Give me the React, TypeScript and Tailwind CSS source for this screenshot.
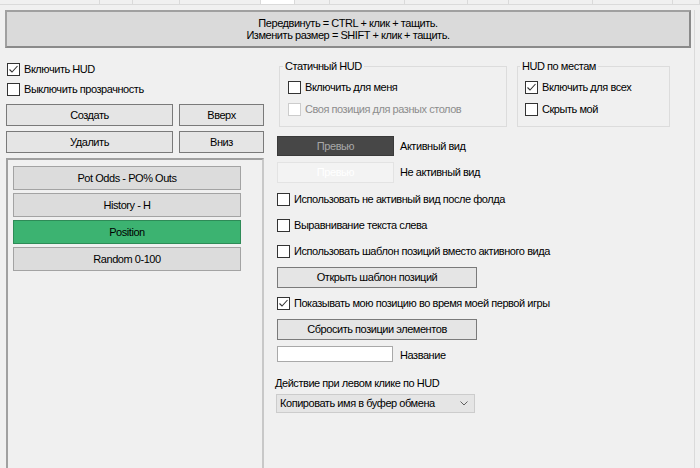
import React from "react";

const tabs = [
  { w: 100 },
  { w: 33 },
  { w: 47 },
  { w: 81 },
  { w: 34, active: true },
  { w: 35 },
  { w: 75 },
  { w: 63 },
  { w: 41 },
  { w: 84 },
  { w: 80 },
  { w: 27 },
];

const hudItems = [
  { label: "Pot Odds - PO% Outs" },
  { label: "History - H" },
  { label: "Position", active: true },
  { label: "Random 0-100" },
];

function Box({ checked, disabled }: { checked?: boolean; disabled?: boolean }) {
  return (
    <span
      className={`flex h-[13px] w-[13px] shrink-0 items-center justify-center border bg-white ${
        disabled ? "border-[#cccccc]" : "border-[#333333]"
      }`}
    >
      {checked && (
        <svg width="11" height="11" viewBox="0 0 11 11">
          <path d="M1.5 5.5 L4 8 L9.5 2" fill="none" stroke="#333333" strokeWidth="1.1" />
        </svg>
      )}
    </span>
  );
}

function Check({
  label,
  checked,
  disabled,
  className = "",
}: {
  label: string;
  checked?: boolean;
  disabled?: boolean;
  className?: string;
}) {
  return (
    <div className={`flex h-[16px] items-center gap-[4px] ${className}`}>
      <Box checked={checked} disabled={disabled} />
      <span className={disabled ? "text-[#8d8d8d]" : ""}>{label}</span>
    </div>
  );
}

function Btn({ children, className = "" }: { children: React.ReactNode; className?: string }) {
  return (
    <div
      className={`flex items-center justify-center border border-[#7a7a7a] bg-[#e5e5e5] ${className}`}
    >
      {children}
    </div>
  );
}

export default function App() {
  return (
    <div className="h-[468px] w-[700px] overflow-hidden bg-[#f0f0f0] font-['Liberation_Sans',Arial,sans-serif] text-[11px] leading-[13px] tracking-[-0.45px] text-black">
      {/* tab strip, labels cut off above */}
      <div className="flex h-[5px] border-b border-[#dadada]">
        {tabs.map((t, i) => (
          <div
            key={i}
            style={{ width: t.w }}
            className={`h-full border-r border-[#dadada] ${t.active ? "bg-white" : "bg-[#f0f0f0]"}`}
          />
        ))}
      </div>

      <div className="h-[463px] w-[695px] border-r border-[#dadada]">
        {/* hint banner */}
        <div className="ml-[5px] mt-[5px] flex h-[38px] w-[686px] flex-col items-center justify-center border-2 border-[#a0a0a0] border-b-[#8a8a8a] border-r-[#8a8a8a] bg-[#dadada] leading-[12px]">
          <span>Передвинуть = CTRL + клик + тащить.</span>
          <span>Изменить размер = SHIFT + клик + тащить.</span>
        </div>

        <div className="flex">
          {/* left column */}
          <div className="ml-[6px] flex w-[258px] flex-col">
            <Check className="ml-[1px] mt-[13px]" label="Включить HUD" checked />
            <Check className="ml-[1px] mt-[4px]" label="Выключить прозрачность" />
            <div className="mt-[7px] flex gap-[6px]">
              <Btn className="h-[22px] w-[167px]">Создать</Btn>
              <Btn className="h-[22px] w-[85px]">Вверх</Btn>
            </div>
            <div className="mt-[5px] flex gap-[6px]">
              <Btn className="h-[22px] w-[167px]">Удалить</Btn>
              <Btn className="h-[22px] w-[85px]">Вниз</Btn>
            </div>
            <div className="mt-[5px] flex h-[320px] w-[258px] flex-col gap-[3px] border-2 border-[#a0a0a0] border-b-[#e3e3e3] border-r-[#c8c8c8] pl-[5px] pt-[6px]">
              {hudItems.map((item) => (
                <div
                  key={item.label}
                  className={`flex h-[24px] w-[228px] items-center justify-center border ${
                    item.active
                      ? "border-[#2e8b57] bg-[#3cb371]"
                      : "border-[#a3a3a3] bg-[#dcdcdc]"
                  }`}
                >
                  {item.label}
                </div>
              ))}
            </div>
          </div>

          {/* right column */}
          <div className="ml-[11px] flex flex-col">
            <div className="mt-[12px] flex">
              <fieldset className="ml-[4px] w-[228px] border border-[#dcdcdc] pb-[9px] pl-[8px]">
                <legend className="-ml-[5px] px-[2px]">Статичный HUD</legend>
                <Check className="mt-[6px]" label="Включить для меня" />
                <Check className="mt-[6px]" label="Своя позиция для разных столов" disabled />
              </fieldset>
              <fieldset className="ml-[10px] w-[153px] border border-[#dcdcdc] pb-[9px] pl-[7px]">
                <legend className="-ml-[5px] px-[2px]">HUD по местам</legend>
                <Check className="mt-[6px]" label="Включить для всех" checked />
                <Check className="mt-[6px]" label="Скрыть мой" />
              </fieldset>
            </div>

            <div className="ml-[2px] mt-[9px] flex items-center gap-[6px]">
              <div className="flex h-[20px] w-[117px] items-center justify-center border border-[#3a3a3a] bg-[#474747] text-[#a8a8a8]">
                Превью
              </div>
              <span>Активный вид</span>
            </div>
            <div className="ml-[2px] mt-[6px] flex items-center gap-[6px]">
              <div className="flex h-[21px] w-[117px] items-center justify-center border border-[#e3e3e3] bg-[#f3f3f3] text-white">
                Превью
              </div>
              <span>Не активный вид</span>
            </div>

            <Check className="ml-[2px] mt-[8px]" label="Использовать не активный вид после фолда" />
            <Check className="ml-[2px] mt-[10px]" label="Выравнивание текста слева" />
            <Check className="ml-[2px] mt-[10px]" label="Использовать шаблон позиций вместо активного вида" />

            <Btn className="ml-[2px] mt-[8px] h-[21px] w-[200px]">Открыть шаблон позиций</Btn>
            <Check className="ml-[2px] mt-[7px]" label="Показывать мою позицию во время моей первой игры" checked />
            <Btn className="ml-[2px] mt-[8px] h-[21px] w-[200px]">Сбросить позиции элементов</Btn>

            <div className="ml-[2px] mt-[6px] flex items-center gap-[7px]">
              <div className="h-[16px] w-[116px] border border-[#a9a9a9] bg-white" />
              <span className="mt-[3px]">Название</span>
            </div>

            <div className="mt-[15px] h-[14px]">Действие при левом клике по HUD</div>
            <div className="ml-[1px] mt-[3px] flex h-[19px] w-[199px] items-center justify-between border border-[#cccccc] bg-[#e5e5e5] pl-[3px] pr-[6px]">
              <span>Копировать имя в буфер обмена</span>
              <svg width="8" height="5" viewBox="0 0 8 5">
                <path d="M0.5 0.5 L4 4 L7.5 0.5" fill="none" stroke="#606060" strokeWidth="1" />
              </svg>
            </div>
          </div>
        </div>
      </div>
    </div>
  );
}
